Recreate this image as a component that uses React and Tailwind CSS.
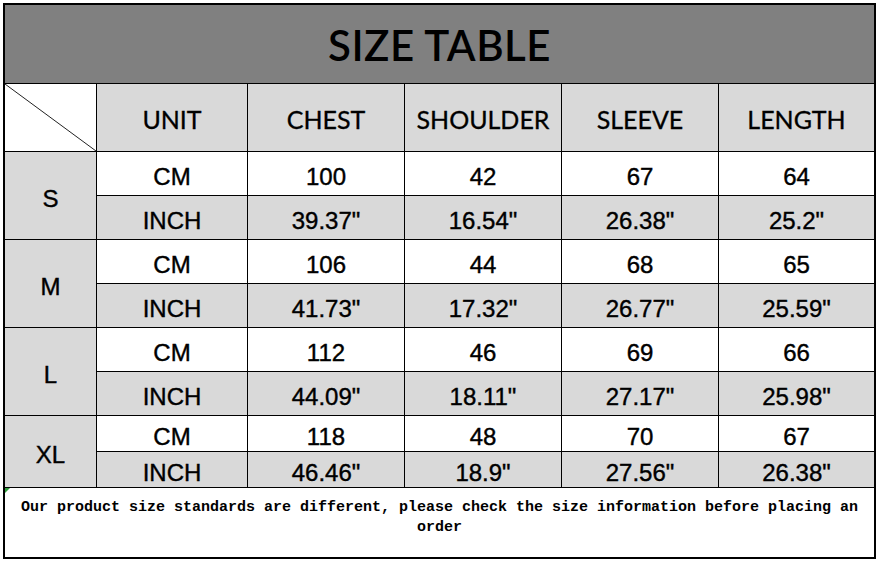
const rows = [
  { size: "S", cm: ["100", "42", "67", "64"], inch: ['39.37"', '16.54"', '26.38"', '25.2"'] },
  { size: "M", cm: ["106", "44", "68", "65"], inch: ['41.73"', '17.32"', '26.77"', '25.59"'] },
  { size: "L", cm: ["112", "46", "69", "66"], inch: ['44.09"', '18.11"', '27.17"', '25.98"'] },
  { size: "XL", cm: ["118", "48", "70", "67"], inch: ['46.46"', '18.9"', '27.56"', '26.38"'] },
];

const heads = ["UNIT", "CHEST", "SHOULDER", "SLEEVE", "LENGTH"];

function Cell({ children, gray, className = "" }) {
  return (
    <div
      className={`flex items-center justify-center pt-[6px] text-[24px] text-black font-['Liberation_Sans',Arial,sans-serif] [-webkit-text-stroke:0.4px_black] ${
        gray ? "bg-[#d9d9d9]" : "bg-white"
      } ${className}`}
    >
      {children}
    </div>
  );
}

export default function App() {
  return (
    <div className="bg-white w-[879px] h-[564px] pt-[3px] pl-[3px]">
      <div className="grid w-fit grid-cols-[91px_150px_156px_156px_156px_155px] grid-rows-[78px_67px_repeat(6,43px)_35px_35px_69px] gap-px bg-black border-2 border-black">
        <div className="col-span-6 flex items-center justify-center bg-[#808080] pt-[3px] font-['Lato',sans-serif] text-[42px] font-semibold tracking-[0.5px] text-black">
          SIZE TABLE
        </div>

        <div className="relative bg-white">
          <svg className="absolute inset-0 h-full w-full" viewBox="0 0 91 67" preserveAspectRatio="none">
            <line x1="0" y1="0" x2="91" y2="67" stroke="#222" strokeWidth="1" />
          </svg>
        </div>
        {heads.map((h) => (
          <div
            key={h}
            className="flex items-center justify-center bg-[#d9d9d9] pt-[4px] font-['Lato',sans-serif] text-[25px] text-black [-webkit-text-stroke:0.3px_black]"
          >
            {h}
          </div>
        ))}

        {rows.map((r) => (
          <Row key={r.size} r={r} />
        ))}

        <div className="relative col-span-6 bg-white px-1 pt-[10px] text-center font-['Liberation_Mono',monospace] text-[15px] font-bold leading-[20px] text-black">
          <span className="absolute left-0 top-0 h-0 w-0 border-r-[5px] border-t-[5px] border-r-transparent border-t-[#2e9c3a]" />
          Our product size standards are different, please check the size information before placing an order
        </div>
      </div>
    </div>
  );
}

function Row({ r }) {
  return (
    <>
      <Cell gray className="row-span-2">
        {r.size}
      </Cell>
      <Cell>CM</Cell>
      {r.cm.map((v, i) => (
        <Cell key={"c" + i}>{v}</Cell>
      ))}
      <Cell gray>INCH</Cell>
      {r.inch.map((v, i) => (
        <Cell key={"i" + i} gray>
          {v}
        </Cell>
      ))}
    </>
  );
}
